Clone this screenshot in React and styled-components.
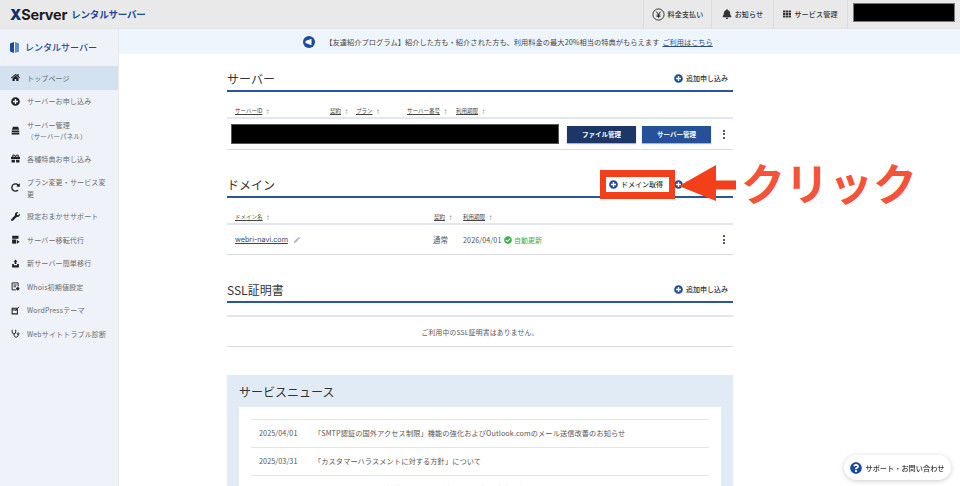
import styled, { createGlobalStyle } from 'styled-components'
import {
  FaHome, FaPlusCircle, FaGift, FaWrench, FaBell, FaCheckCircle, FaPen,
  FaQuestionCircle, FaTh, FaRedoAlt,
} from 'react-icons/fa'

const JP = `"Noto Sans CJK JP", "Liberation Sans", sans-serif`

const GlobalStyle = createGlobalStyle`
  html, body {
    margin: 0;
    height: 486px;
    overflow: hidden;
    background: #fff;
    font-family: ${JP};
    color: #333;
  }
`

const ServerIcon = () => (
  <svg viewBox="0 0 12 12" fill="#222">
    <path d="M2.5 1h7l1.5 4H1z" />
    <rect x="1" y="6" width="10" height="2.4" />
    <rect x="1" y="9" width="10" height="2.4" />
  </svg>
)

const TransferIcon = () => (
  <svg viewBox="0 0 12 12" fill="#222">
    <path d="M1.5 1H10v4H1.500z" />
    <path d="M1.5 6H7v5.500H1.500z" />
    <path d="M8 6.500l3.500 2.500L8 11.500z" />
  </svg>
)

const FileIcon = () => (
  <svg viewBox="0 0 12 12" fill="none" stroke="#222" strokeWidth="1.3">
    <path d="M9.5 6V1.2H1.5v9.3h5" />
    <path d="M3.5 4h4M3.5 6.3h3" />
    <circle cx="9" cy="9" r="1.6" fill="#222" />
  </svg>
)

const ThemeIcon = () => (
  <svg viewBox="0 0 12 12" fill="none" stroke="#222" strokeWidth="1.4">
    <path d="M1.5 3h7v7.5h-7z" />
    <path d="M1.5 5.2h7" />
    <path d="M6 6l5-5" strokeWidth="1.2" />
  </svg>
)

const DoctorIcon = () => (
  <svg viewBox="0 0 12 12" fill="none" stroke="#222" strokeWidth="1.3">
    <path d="M1.5 1v3a2.4 2.4 0 0 0 4.8 0V1" />
    <path d="M3.9 6.5c0 3 1 4.3 3 4.3s2.6-1.5 2.6-3" />
    <circle cx="9.5" cy="6.3" r="1.2" />
  </svg>
)

const MoveIcon = () => (
  <svg viewBox="0 0 12 12" fill="#222">
    <path d="M6 .8l2.6 3H7.200v3H4.800v-3H3.400z" />
    <path d="M1.500 6.500h2.300v1.900h4.400V6.500h2.300v4.700h-9z" />
  </svg>
)

const YenIcon = () => (
  <svg width="13" height="13" viewBox="0 0 13 13" fill="none" stroke="#222">
    <circle cx="6.5" cy="6.5" r="5.6" strokeWidth="0.9" />
    <path d="M4.300 3.500l2.200 3 2.200-3M6.500 6.500v3.200M4.600 7h3.800M4.600 8.300h3.800" strokeWidth="1" />
  </svg>
)

const MegaphoneIcon = () => (
  <svg width="12" height="12" viewBox="0 0 12 12">
    <circle cx="6" cy="6" r="6" fill="#1a4b9c" />
    <path d="M2.500 5l6-2.300v6.600l-6-2.300z" fill="#fff" />
  </svg>
)

const menu = [
  { icon: <FaHome />, label: 'トップページ', active: true },
  { icon: <FaPlusCircle />, label: 'サーバーお申し込み' },
  { icon: <ServerIcon />, label: 'サーバー管理', sub: '（サーバーパネル）' },
  { icon: <FaGift />, label: '各種特典お申し込み' },
  { icon: <FaRedoAlt />, label: 'プラン変更・サービス変更', wrap: true },
  { icon: <FaWrench />, label: '設定おまかせサポート' },
  { icon: <TransferIcon />, label: 'サーバー移転代行' },
  { icon: <MoveIcon />, label: '新サーバー簡単移行' },
  { icon: <FileIcon />, label: 'Whois初期値設定' },
  { icon: <ThemeIcon />, label: 'WordPressテーマ' },
  { icon: <DoctorIcon />, label: 'Webサイトトラブル診断' },
]

const news = [
  { date: '2025/04/01', text: '「SMTP認証の国外アクセス制限」機能の強化およびOutlook.comのメール送信改善のお知らせ' },
  { date: '2025/03/31', text: '「カスタマーハラスメントに対する方針」について' },
  { date: '2025/03/25', text: 'サーバーパネルの一部機能における仕様変更および提供内容の変更に関するお知らせについて' },
]

const App = () => {
  return (
    <>
      <GlobalStyle />
      <TopBar>
        <Logo>
          <LogoMark><b>X</b>Server</LogoMark>
          <LogoSub>レンタルサーバー</LogoSub>
        </Logo>
        <TopNav>
          <TopItem $w={67}><YenIcon />料金支払い</TopItem>
          <TopItem $w={61}><FaBell size={10} />お知らせ</TopItem>
          <TopItem $w={73}><FaTh size={8} />サービス管理</TopItem>
          <Account><Redacted /></Account>
        </TopNav>
      </TopBar>

      <Layout>
        <Sidebar>
          <SideTitle>
            <svg width="9" height="11" viewBox="0 0 9 11">
              <path d="M0 1.500L4 0v11l-4-1.500z" fill="#1a4b9c" />
              <path d="M5 0l4 1.500v8L5 11z" fill="#5c8fd0" />
            </svg>
            レンタルサーバー
          </SideTitle>
          {menu.map((item) => (
            <MenuItem key={item.label} $active={item.active} $tall={item.sub || item.wrap}>
              <MenuIcon>{item.icon}</MenuIcon>
              <MenuText>
                {item.label}
                {item.sub && <MenuSub>{item.sub}</MenuSub>}
              </MenuText>
            </MenuItem>
          ))}
        </Sidebar>

        <Main>
          <Notice>
            <MegaphoneIcon />
            <NoticeText>【友達紹介プログラム】紹介した方も・紹介された方も、利用料金の最大20%相当の特典がもらえます</NoticeText>
            <NoticeLink>ご利用はこちら</NoticeLink>
          </Notice>

          <Content>
            <SectionHead>
              <SectionTitle>サーバー</SectionTitle>
              <AddLink><FaPlusCircle />追加申し込み</AddLink>
            </SectionHead>
            <TableHead $cols="95px 26px 51px 49px 1fr">
              <SortCol>サーバーID</SortCol>
              <SortCol>契約</SortCol>
              <SortCol>プラン</SortCol>
              <SortCol>サーバー番号</SortCol>
              <SortCol>利用期限</SortCol>
            </TableHead>
            <ServerRow>
              <RedactedRow />
              <PanelButton $dark>ファイル管理</PanelButton>
              <PanelButton>サーバー管理</PanelButton>
              <Kebab><i /><i /><i /></Kebab>
            </ServerRow>

            <SectionHead $top={24}>
              <SectionTitle>ドメイン</SectionTitle>
              <DomainActions>
                <AddLink><FaPlusCircle />ドメイン取得</AddLink>
                <AddLink><FaPlusCircle />追加申し込み</AddLink>
                <Highlight />
                <Arrow viewBox="0 0 57 36">
                  <path d="M0 21L37 0v15.500h20v9H37V36z" fill="#f33f1a" />
                </Arrow>
              </DomainActions>
              <ClickLabel>クリック</ClickLabel>
            </SectionHead>
            <TableHead $cols="199px 29px 1fr">
              <SortCol>ドメイン名</SortCol>
              <SortCol>契約</SortCol>
              <SortCol>利用期限</SortCol>
            </TableHead>
            <DomainRow>
              <DomainName><u>webri-navi.com</u><FaPen /></DomainName>
              <ContractCell>通常</ContractCell>
              <DateCell>2026/04/01</DateCell>
              <AutoRenew><FaCheckCircle />自動更新</AutoRenew>
              <Kebab><i /><i /><i /></Kebab>
            </DomainRow>

            <SectionHead $top={24}>
              <SectionTitle>SSL証明書</SectionTitle>
              <AddLink><FaPlusCircle />追加申し込み</AddLink>
            </SectionHead>
            <EmptyRow>ご利用中のSSL証明書はありません。</EmptyRow>

            <NewsBox>
              <NewsTitle>サービスニュース</NewsTitle>
              <NewsCard>
                {news.map((n) => (
                  <NewsRow key={n.date}>
                    <NewsDate>{n.date}</NewsDate>
                    <span>{n.text}</span>
                  </NewsRow>
                ))}
              </NewsCard>
            </NewsBox>
          </Content>
        </Main>
      </Layout>

      <Support><FaQuestionCircle />サポート・お問い合わせ</Support>
    </>
  )
}

const TopBar = styled.header`
  height: 28px;
  background: #e9e9e9;
  border-bottom: 1px solid #e2e2e2;
  display: flex;
  justify-content: space-between;
`

const Logo = styled.div`
  display: flex;
  align-items: center;
  gap: 4px;
  padding-left: 10px;
`

const LogoMark = styled.span`
  font-family: "Inter", "Liberation Sans", sans-serif;
  font-size: 14.5px;
  font-weight: 700;
  letter-spacing: -0.2px;
  color: #1b1b1b;

  b {
    color: #12316e;
  }
`

const LogoSub = styled.span`
  font-size: 9.5px;
  font-weight: 700;
  color: #1a4b9c;
  letter-spacing: -0.2px;
`

const TopNav = styled.nav`
  display: flex;
`

const TopItem = styled.div`
  width: ${({ $w }) => $w}px;
  display: flex;
  align-items: center;
  justify-content: center;
  gap: 3px;
  font-size: 7px;
  font-weight: 500;
  letter-spacing: 0.2px;
  color: #333;
  border-left: 1px solid #dcdcdc;
`

const Account = styled.div`
  width: 113px;
  padding: 3px 5px 6px;
  border-left: 1px solid #dcdcdc;
  box-sizing: border-box;
  display: flex;
`

const Redacted = styled.div`
  flex: 1;
  background: #000;
  border: 1px solid #777;
`

const Layout = styled.div`
  display: flex;
`

const Sidebar = styled.aside`
  width: 118px;
  height: 457px;
  flex: none;
  background: #eff2f8;
  border-right: 1px solid #e6e9ef;
`

const SideTitle = styled.div`
  height: 37px;
  display: flex;
  align-items: center;
  gap: 6px;
  padding-left: 10px;
  font-size: 9px;
  font-weight: 500;
  color: #1a4b9c;
`

const MenuItem = styled.div`
  min-height: ${({ $tall }) => ($tall ? 34 : 23.5)}px;
  display: flex;
  align-items: center;
  padding: 0 9px 0 11px;
  background: ${({ $active }) => ($active ? '#d3e1f0' : 'transparent')};
`

const MenuIcon = styled.span`
  width: 16px;
  flex: none;
  display: flex;
  font-size: 9px;
  color: #222;

  svg {
    width: 9px;
    height: 9px;
  }
`

const MenuText = styled.span`
  font-size: 7px;
  line-height: 12px;
  letter-spacing: 0.15px;
  color: #6a6a6a;
`

const MenuSub = styled.span`
  display: block;
  font-size: 6.5px;
  line-height: 11px;
`

const Main = styled.main`
  flex: 1;
  min-width: 0;
`

const Notice = styled.div`
  height: 25px;
  background: #eef5fd;
  display: flex;
  align-items: center;
  justify-content: center;
  gap: 3px;
  padding-right: 63px;
  font-size: 7.2px;
  color: #444;

  svg {
    margin-right: 7px;
  }
`

const NoticeText = styled.span`
  letter-spacing: 0.08px;
`

const NoticeLink = styled.span`
  color: #2f4d80;
  text-decoration: underline;
`

const Content = styled.div`
  width: 506px;
  margin-left: 108px;
  padding-top: 14px;
`

const SectionHead = styled.div`
  position: relative;
  height: 24px;
  box-sizing: border-box;
  padding-bottom: 2px;
  margin-top: ${({ $top }) => $top || 0}px;
  display: flex;
  align-items: center;
  justify-content: space-between;
  border-bottom: 2px solid #2a559f;
`

const SectionTitle = styled.h2`
  margin: 0;
  font-size: 12px;
  font-weight: 400;
  color: #333;
`

const AddLink = styled.span`
  display: flex;
  align-items: center;
  gap: 3px;
  margin-right: 5px;
  font-size: 7px;
  font-weight: 500;
  color: #333;

  svg {
    font-size: 9px;
    color: #1a4b9c;
  }
`

const DomainActions = styled.div`
  position: relative;
  display: flex;

  ${AddLink}:first-child {
    margin-right: 11px;
  }
`

const Highlight = styled.div`
  position: absolute;
  left: -9px;
  top: -9px;
  width: 75px;
  height: 29px;
  box-sizing: border-box;
  border: solid #f33f1a;
  border-width: 7px 6.5px;
`

const Arrow = styled.svg`
  position: absolute;
  left: 70px;
  top: -14px;
  width: 57px;
  height: 36px;
`

const ClickLabel = styled.span`
  position: absolute;
  left: 514px;
  top: -20px;
  white-space: nowrap;
  font-size: 44px;
  line-height: 56px;
  font-weight: 700;
  color: #f4533a;
`

const TableHead = styled.div`
  display: grid;
  grid-template-columns: ${({ $cols }) => $cols};
  align-items: end;
  height: 27px;
  padding: 0 0 2px 8px;
  box-sizing: border-box;
  border-bottom: 2px solid #e2e6ee;
`

const SortCol = styled.span`
  font-size: 5.5px;
  color: #444;
  white-space: nowrap;
  text-decoration: underline;

  &::after {
    content: '↕';
    display: inline-block;
    margin-left: 3px;
    font-size: 5px;
    color: #999;
    text-decoration: none;
  }
`

const ServerRow = styled.div`
  height: 30px;
  display: flex;
  align-items: center;
  padding-left: 4px;
  border-bottom: 1px solid #d5dce8;
`

const RedactedRow = styled.div`
  width: 328px;
  height: 20px;
  box-sizing: border-box;
  background: #000;
  border: 1px solid #555;
  margin-right: 8px;
`

const PanelButton = styled.div`
  width: 69px;
  height: 17px;
  margin-right: 6px;
  display: flex;
  align-items: center;
  justify-content: center;
  font-size: 6.5px;
  font-weight: 700;
  color: #fff;
  background: ${({ $dark }) => ($dark ? '#1c3668' : '#255199')};
  box-shadow: 0 1px 1px rgba(0, 0, 0, 0.3);
`

const Kebab = styled.div`
  margin-left: auto;
  margin-right: 8px;
  display: flex;
  flex-direction: column;
  gap: 1.5px;

  i {
    width: 2px;
    height: 2px;
    border-radius: 50%;
    background: #222;
  }
`

const DomainRow = styled.div`
  height: 29px;
  display: flex;
  align-items: center;
  padding-left: 8px;
  border-bottom: 1px solid #d5dce8;
  font-size: 7.5px;
`

const DomainName = styled.span`
  width: 198px;
  display: flex;
  align-items: center;
  gap: 6px;
  color: #33466b;
  font-family: "Inter", "Liberation Sans", sans-serif;
  font-size: 7.2px;

  svg {
    font-size: 6px;
    color: #bbb;
  }
`

const ContractCell = styled.span`
  width: 30px;
  color: #555;
`

const DateCell = styled.span`
  width: 41px;
  color: #555;
  font-size: 7.2px;
  letter-spacing: 0.1px;
`

const AutoRenew = styled.span`
  display: flex;
  align-items: center;
  gap: 2px;
  color: #37b34a;
  font-size: 7px;

  svg {
    font-size: 8px;
  }
`

const EmptyRow = styled.div`
  height: 32px;
  margin-top: 12px;
  box-sizing: border-box;
  display: flex;
  align-items: center;
  justify-content: center;
  border-top: 2px solid #e2e6ee;
  border-bottom: 1px solid #d5dce8;
  font-size: 6.8px;
  letter-spacing: 0.2px;
  color: #555;
`

const NewsBox = styled.section`
  margin-top: 28px;
  padding: 0 12px;
  background: #e1ebf6;
`

const NewsTitle = styled.h2`
  margin: 0;
  height: 32px;
  display: flex;
  align-items: center;
  font-size: 12px;
  font-weight: 400;
  color: #333;
`

const NewsCard = styled.div`
  background: #fff;
  padding: 12px 12px 0;
`

const NewsRow = styled.div`
  height: 28px;
  display: flex;
  align-items: center;
  padding: 0 0 1px 8px;
  box-sizing: border-box;
  border-top: 1.5px solid #dfe5ef;
  font-size: 7.2px;
  letter-spacing: 0.1px;
  color: #555;
`

const NewsDate = styled.span`
  width: 55px;
  flex: none;
`

const Support = styled.div`
  position: fixed;
  left: 844px;
  top: 455px;
  width: 107px;
  height: 25px;
  box-sizing: border-box;
  display: flex;
  align-items: center;
  justify-content: center;
  gap: 3px;
  background: #fff;
  border-radius: 13px;
  box-shadow: 0 1px 5px rgba(0, 0, 0, 0.2);
  font-size: 7.2px;
  font-weight: 500;
  color: #333;

  svg {
    font-size: 12px;
    color: #1a4b9c;
  }
`

export default App
